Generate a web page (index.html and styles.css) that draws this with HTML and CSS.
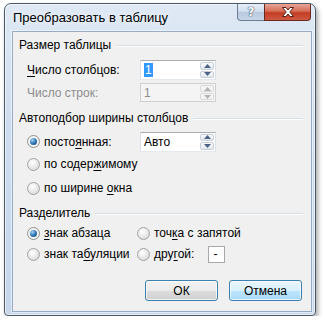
FILE: index.html
```html
<!DOCTYPE html>
<html lang="ru">
<head>
    <meta charset="UTF-8">
    <title>Преобразовать в таблицу</title>
    <link rel="stylesheet" href="styles.css">
</head>
<body>

<div class="window">
    <div class="titlebar">
        <span class="title">Преобразовать в таблицу</span>
        <div class="caption-buttons">
            <span class="cap-btn help">?</span>
            <span class="cap-btn close">
                <svg width="16" height="12" viewBox="0 0 16 12">
                    <path d="M2.5 1.5 H6 L8 4 L10 1.5 H13.5 L9.8 6 L13.5 10.5 H10 L8 8 L6 10.5 H2.5 L6.2 6 Z" fill="#fff" stroke="#5a1e14" stroke-width="1" stroke-linejoin="round"/>
                </svg>
            </span>
        </div>
    </div>

    <div class="client">
        <div class="group-title g1"><span>Размер таблицы</span><i></i></div>

        <div class="row r-cols">
            <span class="label"><u>Ч</u>исло столбцов:</span>
            <div class="spin">
                <span class="spin-text"><span class="sel">1</span></span>
                <div class="spin-btns">
                    <span class="spin-btn"><svg width="7" height="4" viewBox="0 0 7 4"><path d="M0 4 L3.5 0 L7 4 Z" fill="#4d6185"/></svg></span>
                    <span class="spin-btn"><svg width="7" height="4" viewBox="0 0 7 4"><path d="M0 0 L3.5 4 L7 0 Z" fill="#4d6185"/></svg></span>
                </div>
            </div>
        </div>

        <div class="row r-rows">
            <span class="label disabled">Число строк:</span>
            <div class="spin is-disabled">
                <span class="spin-text">1</span>
                <div class="spin-btns">
                    <span class="spin-btn"><svg width="7" height="4" viewBox="0 0 7 4"><path d="M0 4 L3.5 0 L7 4 Z" fill="#b4b4b4"/></svg></span>
                    <span class="spin-btn"><svg width="7" height="4" viewBox="0 0 7 4"><path d="M0 0 L3.5 4 L7 0 Z" fill="#b4b4b4"/></svg></span>
                </div>
            </div>
        </div>

        <div class="group-title g2"><span>Автоподбор ширины столбцов</span><i></i></div>

        <div class="row r-fixed">
            <span class="option fixed-label"><span class="radio checked"></span><span>посто<u>я</u>нная:</span></span>
            <div class="spin">
                <span class="spin-text">Авто</span>
                <div class="spin-btns">
                    <span class="spin-btn"><svg width="7" height="4" viewBox="0 0 7 4"><path d="M0 4 L3.5 0 L7 4 Z" fill="#4d6185"/></svg></span>
                    <span class="spin-btn"><svg width="7" height="4" viewBox="0 0 7 4"><path d="M0 0 L3.5 4 L7 0 Z" fill="#4d6185"/></svg></span>
                </div>
            </div>
        </div>

        <div class="row r-content">
            <span class="option"><span class="radio"></span><span>по содер<u>ж</u>имому</span></span>
        </div>

        <div class="row r-window">
            <span class="option"><span class="radio"></span><span>по ширине <u>о</u>кна</span></span>
        </div>

        <div class="group-title g3"><span>Разделитель</span><i></i></div>

        <div class="row r-sep1">
            <span class="option col1"><span class="radio checked"></span><span><u>з</u>нак абзаца</span></span>
            <span class="option"><span class="radio"></span><span>точ<u>к</u>а с запятой</span></span>
        </div>

        <div class="row r-sep2">
            <span class="option col1"><span class="radio"></span><span>знак та<u>б</u>уляции</span></span>
            <span class="option"><span class="radio"></span><span>дру<u>г</u>ой:</span></span>
            <span class="small-box">-</span>
        </div>

        <div class="buttons">
            <span class="btn default">ОК</span>
            <span class="btn hover">Отмена</span>
        </div>
    </div>
</div>

</body>
</html>
```

FILE: styles.css
```css
body {
    margin: 0;
    padding: 3px 0 0 4px;
    background: #ffffff;
    font-family: 'Liberation Sans', Arial, sans-serif;
    font-size: 12px;
    color: #000;
}

u {
    text-decoration: underline;
    text-underline-offset: 2px;
}

.window {
    width: 312px;
    height: 313px;
    box-sizing: border-box;
    border: 1px solid #4a5868;
    border-radius: 7px 7px 4px 4px;
    background: linear-gradient(180deg, #dfe9f5 0%, #cddcee 40%, #c6d7ec 100%);
    box-shadow: 2px 3px 5px rgba(0, 0, 0, 0.35), inset 0 0 0 1px rgba(255, 255, 255, 0.6);
    display: flex;
    flex-direction: column;
}

.titlebar {
    height: 27px;
    display: flex;
    align-items: flex-start;
    padding-left: 8px;
}

.title {
    font-size: 13px;
    line-height: 27px;
    color: #000;
    text-shadow: 0 0 6px rgba(255, 255, 255, 0.9);
    flex: 1;
}

.caption-buttons {
    display: flex;
    margin-right: 4px;
}

.cap-btn {
    height: 17px;
    box-sizing: border-box;
    border: 1px solid #6d7e94;
    border-top: none;
    display: flex;
    align-items: center;
    justify-content: center;
}

.help {
    width: 27px;
    border-radius: 0 0 0 4px;
    border-right: none;
    background: linear-gradient(180deg, #e6eef8 0%, #cfdcec 50%, #b8c9df 51%, #c7d6e8 100%);
    font-family: 'DejaVu Sans', sans-serif;
    font-size: 12px;
    font-weight: bold;
    color: #fff;
    text-shadow: 0 0 1px #3b4a5e, 0 0 1px #3b4a5e, 0 0 1px #3b4a5e;
}

.close {
    width: 47px;
    border-color: #6b2a20;
    border-radius: 0 0 4px 0;
    background: linear-gradient(180deg, #e8a597 0%, #d66d57 45%, #c23c24 55%, #cf5a41 100%);
}

.client {
    margin: 0 3px 0 7px;
    height: 281px;
    box-sizing: border-box;
    border: 1px solid #97abc4;
    background: #f0f0f0;
    padding: 0 8px 0 6px;
    box-shadow: 0 0 0 1px rgba(255, 255, 255, 0.5);
}

.group-title {
    height: 16px;
    display: flex;
    align-items: center;
    line-height: 16px;
}

.group-title i {
    flex: 1;
    margin-left: 5px;
    margin-top: 2px;
    border-top: 1px solid #d5dfe5;
    border-bottom: 1px solid #fff;
}

.g1 { margin-top: 5px; }
.g2 { margin-top: 8px; }
.g3 { margin-top: 7px; }

.row {
    display: flex;
    align-items: center;
    margin-left: 8px;
    height: 20px;
}

.r-cols { margin-top: 7px; }
.r-rows { margin-top: 3px; height: 19px; }
.r-fixed { margin-top: 6px; height: 19px; }
.r-content { margin-top: 3px; }
.r-window { margin-top: 4px; }
.r-sep1 { margin-top: 2px; }
.r-sep2 { margin-top: 1px; }

.label {
    width: 113px;
}

.disabled {
    color: #8d8d8d;
}

.fixed-label {
    width: 113px;
}

.option {
    display: flex;
    align-items: center;
}

.col1 {
    width: 110px;
}

.radio {
    width: 13px;
    height: 13px;
    box-sizing: border-box;
    border-radius: 50%;
    border: 1px solid #a3a3a3;
    background: radial-gradient(circle at 40% 35%, #ffffff 0%, #e4e4e4 60%, #cfcfcf 100%);
    margin-right: 4px;
    position: relative;
}

.radio.checked {
    background: #f4f4f4;
    border-color: #8e8f8f;
}

.radio.checked::after {
    content: "";
    position: absolute;
    left: 2px;
    top: 2px;
    width: 7px;
    height: 7px;
    border-radius: 50%;
    background: radial-gradient(circle at 35% 30%, #a9d4f5 0%, #2f78b8 50%, #143f6a 100%);
}

.spin {
    width: 76px;
    height: 20px;
    box-sizing: border-box;
    border: 1px solid #abadb3;
    border-left-color: #dbdfe6;
    border-right-color: #dbdfe6;
    border-bottom-color: #e3e9ef;
    background: #fff;
    display: flex;
    align-items: center;
}

.r-rows .spin {
    height: 19px;
}

.spin-text {
    flex: 1;
    padding-left: 3px;
    line-height: 16px;
}

.sel {
    background: #3399ff;
    color: #fff;
    padding: 0 1px;
}

.spin.is-disabled {
    background: #f4f4f4;
    border-color: #d0d0d0;
    color: #8d8d8d;
}

.spin-btns {
    width: 14px;
    height: 100%;
    display: flex;
    flex-direction: column;
    margin-right: 1px;
    padding: 1px 0;
    box-sizing: border-box;
}

.spin-btn {
    flex: 1;
    display: flex;
    align-items: center;
    justify-content: center;
    border: 1px solid #c9cfd8;
    background: linear-gradient(180deg, #f6f8fb, #e4e9f0);
    border-radius: 2px;
}

.spin-btn + .spin-btn {
    margin-top: 1px;
}

.is-disabled .spin-btn {
    border-color: #dadada;
    background: #f4f4f4;
}

.small-box {
    width: 17px;
    height: 17px;
    box-sizing: border-box;
    border: 1px solid #a8a8a8;
    background: #fff;
    margin-left: 14px;
    padding-left: 4px;
    line-height: 14px;
}

.buttons {
    display: flex;
    justify-content: flex-end;
    margin-top: 16px;
    margin-right: 1px;
    gap: 11px;
}

.btn {
    width: 73px;
    height: 21px;
    box-sizing: border-box;
    border: 1px solid #3c7fb1;
    border-radius: 3px;
    display: flex;
    align-items: center;
    justify-content: center;
    box-shadow: inset 0 0 0 1px rgba(255, 255, 255, 0.7);
}

.btn.default {
    background: linear-gradient(180deg, #f2f2f2 0%, #ebebeb 50%, #dddddd 51%, #cfcfcf 100%);
}

.btn.hover {
    background: linear-gradient(180deg, #eaf6fd 0%, #d9f0fc 50%, #bee6fd 51%, #a7d9f5 100%);
}
```
